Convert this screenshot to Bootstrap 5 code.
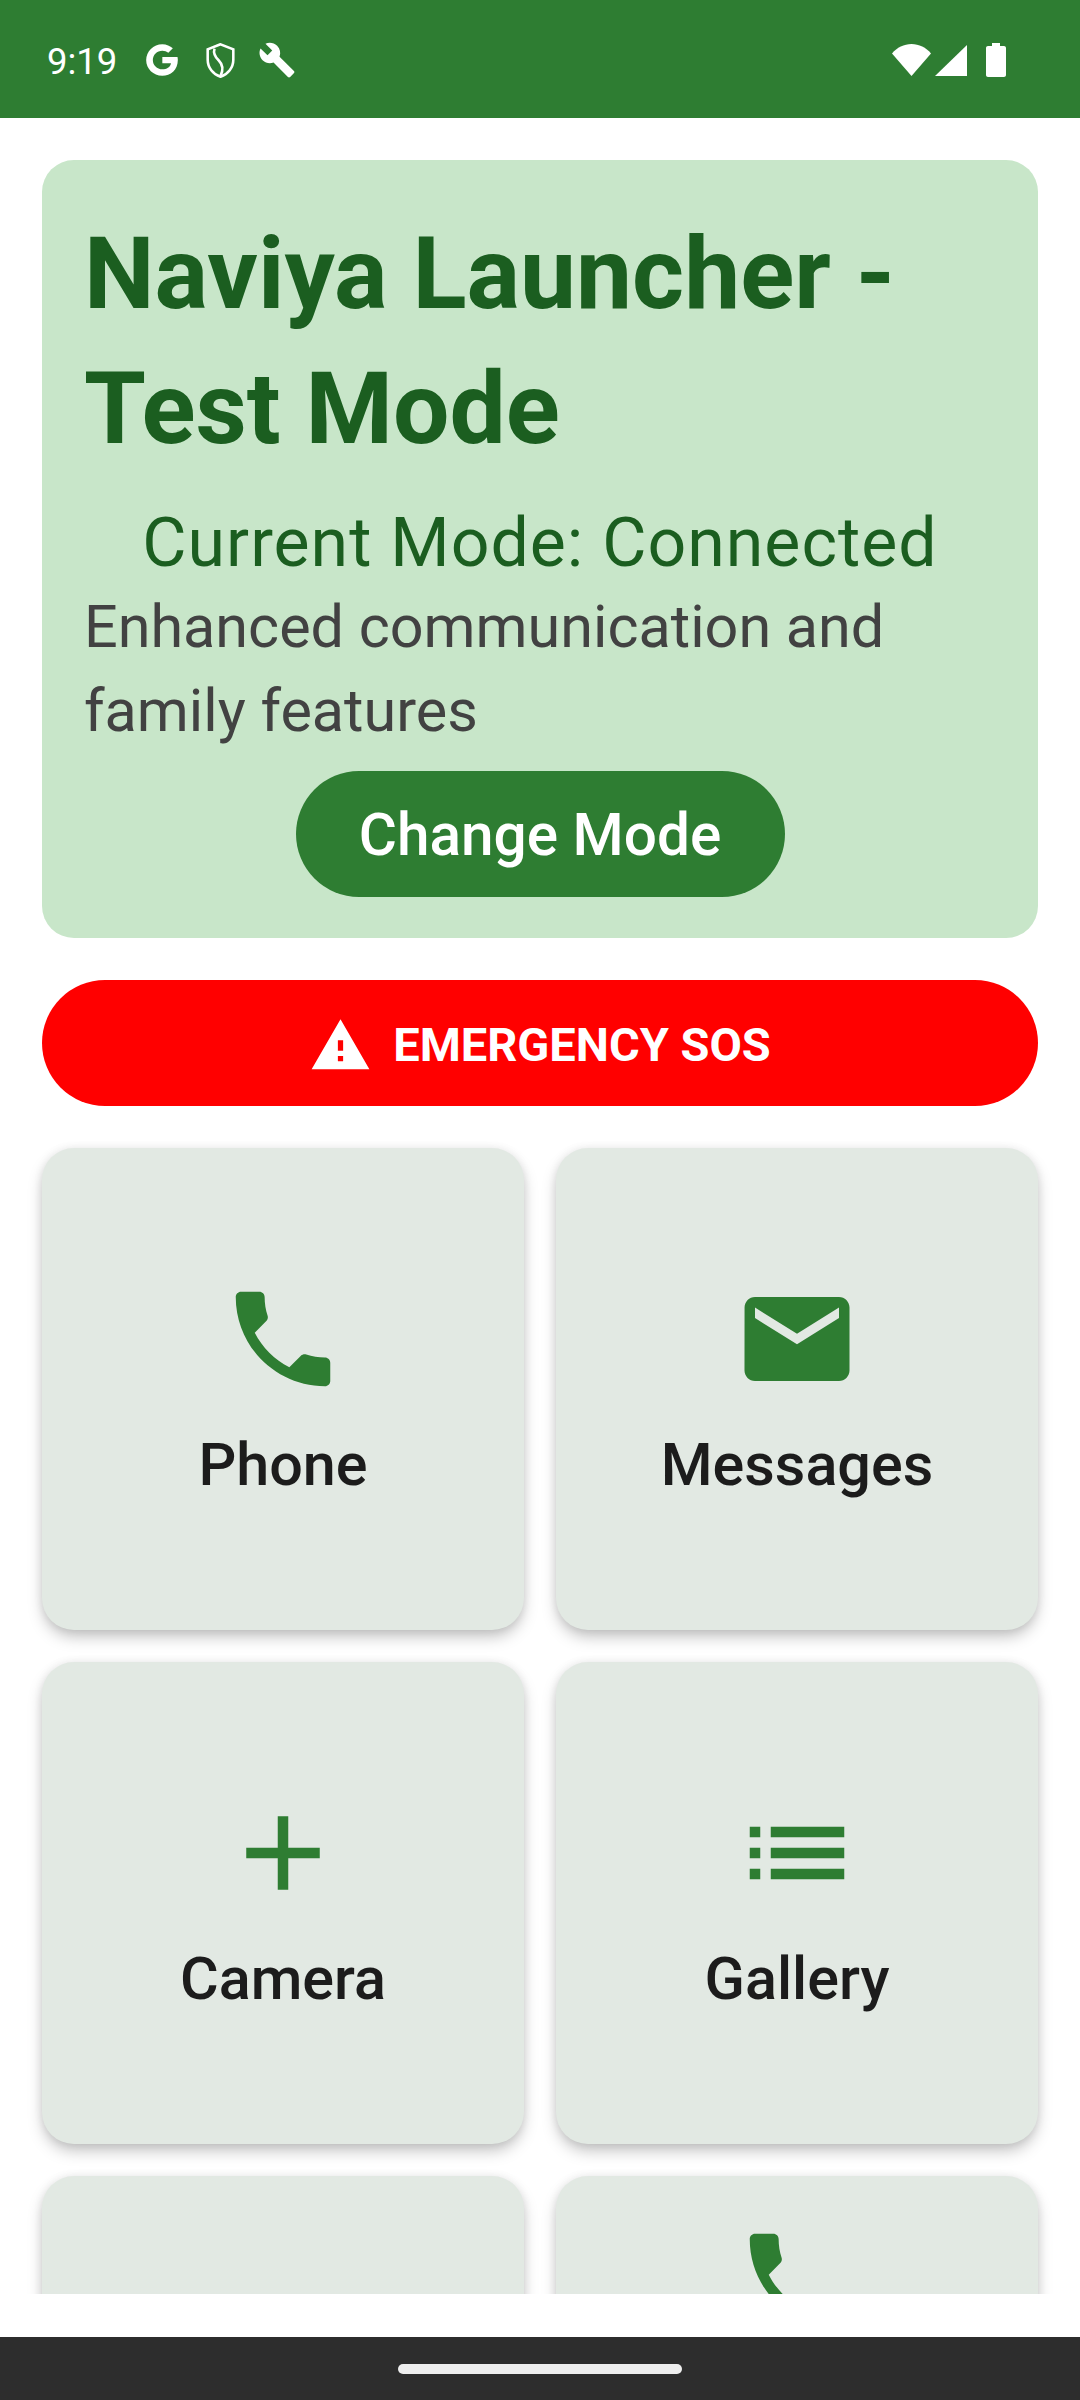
<!DOCTYPE html>
<html lang="en">
<head>
    <meta charset="UTF-8">
    <title>Naviya Launcher</title>
    <link href="https://cdn.jsdelivr.net/npm/bootstrap@5.3.3/dist/css/bootstrap.min.css" rel="stylesheet">
    <style>
        html, body { height: 2400px; overflow: hidden; }
        body { font-family: Roboto, "Liberation Sans", sans-serif; background: #fff; }
        .status-strip { height: 118px; background: #2E7D32; color: #fff; padding: 2px 74px 0 47px; }
        .status-time { font-size: 36.5px; line-height: 1; width: 95px; margin-top: 4px; }
        .status-shield { margin-left: 18px; }
        .status-wrench { margin-left: 17px; }
        .status-signal { margin-left: 4px; }
        .status-batt { margin-left: 19px; }
        .scroll-area { height: 2176px; padding: 42px 42px 0; }
        .hero-box { background: #C8E6C9; border-radius: 32px; padding: 46px 42px 0; height: 778px; }
        .hero-title { font-size: 100px; font-weight: 700; line-height: 135px; color: #1B5E20; margin: 0 0 25px; }
        .hero-mode { font-size: 68px; line-height: 84px; color: #1B5E20; letter-spacing: 1px; text-align: center; }
        .hero-desc { font-size: 59.3px; line-height: 84px; color: #424242; }
        .btn.change-btn { display: block; width: 489px; height: 126px; margin: 18px auto 0; border: 0; border-radius: 63px; background: #2E7D32; color: #fff; font-size: 58.5px; font-weight: 500; padding: 3px 0 0; }
        .btn.sos-btn { width: 100%; height: 126px; margin-top: 42px; border: 0; border-radius: 63px; background: #f00; color: #fff; font-size: 47px; font-weight: 700; padding: 4px 0 0; gap: 21px; }
        .tile-grid { display: grid; grid-template-columns: 482px 482px; gap: 32px; margin-top: 42px; }
        .card.tile { height: 482px; padding-top: 5px; background: #E2E9E3; border: 0; border-radius: 32px; box-shadow: 0 8px 16px -2px rgba(0,0,0,.26), 0 0 10px rgba(0,0,0,.07); }
        .card.tile-top { padding-top: 42px; }
        .tile-icon { width: 126px; height: 126px; fill: #2E7D32; }
        .tile-label { font-size: 59.3px; font-weight: 500; line-height: 84px; color: #1c1c1c; margin-top: 21px; }
        .nav-strip { height: 63px; margin-top: 43px; background: #2D2D2D; }
        .nav-pill { width: 284px; height: 10px; border-radius: 5px; background: #eee; }
    </style>
</head>
<body>

<div class="status-strip d-flex align-items-center">
    <div class="status-time">9:19</div>
    <svg width="40" height="40" viewBox="0 0 24 24" fill="#fff"><path d="M12.200 10.200v3.700h5.200c-.5 2.400-2.500 3.700-5.200 3.700-3.200 0-5.700-2.500-5.700-5.600s2.500-5.600 5.700-5.600c1.400 0 2.600.5 3.600 1.300l2.700-2.700C16.900 3.500 14.700 2.500 12.200 2.500 6.800 2.500 2.500 6.800 2.500 12s4.300 9.500 9.700 9.500c4.900 0 9.300-3.500 9.300-9.500 0-.6-.1-1.200-.2-1.800z"/></svg>
    <svg class="status-shield" width="41" height="41" viewBox="0 0 24 24" fill="none" stroke="#fff" stroke-width="1.500"><path d="M12 2.500 4.500 5.500v6c0 4.600 3.100 8.500 7.500 10 4.400-1.500 7.500-5.400 7.500-10v-6z"/><path d="M8.500 5c-1 3 .5 5 2.500 7 2 2 3 5 1 9"/></svg>
    <svg class="status-wrench" width="38" height="38" viewBox="0 0 24 24" fill="#fff"><path d="M22.700 19l-9.100-9.100c.9-2.300.4-5-1.500-6.900-2-2-5-2.400-7.400-1.300L9 6 6 9 1.600 4.700C.4 7.100.9 10.100 2.900 12.100c1.900 1.900 4.600 2.400 6.900 1.500l9.100 9.100c.4.400 1 .4 1.400 0l2.300-2.300c.5-.4.500-1.100.1-1.400z"/></svg>
    <div class="ms-auto d-flex align-items-center">
        <svg width="39" height="32" viewBox="0 0 39 32" fill="#fff"><path d="M19.500 32 0 9.500C5 3.500 12 0 19.500 0S34 3.500 39 9.500z"/></svg>
        <svg class="status-signal" width="32" height="31" viewBox="0 0 32 31" fill="#fff"><path d="M32 0v31H0z"/></svg>
        <svg class="status-batt" width="20" height="34" viewBox="0 0 20 34" fill="#fff"><path d="M6 0h8v3h4c1.100 0 2 .9 2 2v27c0 1.100-.9 2-2 2H2c-1.100 0-2-.9-2-2V5c0-1.100.9-2 2-2h4z"/></svg>
    </div>
</div>

<div class="scroll-area overflow-hidden">
    <div class="hero-box">
        <h1 class="hero-title">Naviya Launcher - Test Mode</h1>
        <div class="hero-mode">Current Mode: Connected</div>
        <div class="hero-desc">Enhanced communication and family features</div>
        <button type="button" class="btn change-btn">Change Mode</button>
    </div>

    <button type="button" class="btn sos-btn d-flex align-items-center justify-content-center">
        <svg width="63" height="63" viewBox="0 0 24 24" fill="#fff"><path d="M1 21h22L12 2 1 21zm12-3h-2v-2h2v2zm0-4h-2v-4h2v4z"/></svg>
        EMERGENCY SOS
    </button>

    <div class="tile-grid">
        <div class="card tile align-items-center justify-content-center">
            <svg class="tile-icon" viewBox="0 0 24 24"><path d="M6.620 10.790c1.440 2.830 3.760 5.140 6.590 6.590l2.200-2.200c.27-.27.67-.36 1.020-.24 1.120.37 2.330.57 3.570.57.55 0 1 .45 1 1V20c0 .55-.45 1-1 1-9.390 0-17-7.610-17-17 0-.55.45-1 1-1h3.500c.55 0 1 .45 1 1 0 1.250.2 2.450.57 3.570.11.35.03.74-.25 1.020l-2.200 2.200z"/></svg>
            <div class="tile-label">Phone</div>
        </div>
        <div class="card tile align-items-center justify-content-center">
            <svg class="tile-icon" viewBox="0 0 24 24"><path d="M20 4H4c-1.100 0-1.990.9-1.990 2L2 18c0 1.100.9 2 2 2h16c1.100 0 2-.9 2-2V6c0-1.100-.9-2-2-2zm0 4l-8 5-8-5V6l8 5 8-5v2z"/></svg>
            <div class="tile-label">Messages</div>
        </div>
        <div class="card tile align-items-center justify-content-center">
            <svg class="tile-icon" viewBox="0 0 24 24"><path d="M19 13h-6v6h-2v-6H5v-2h6V5h2v6h6v2z"/></svg>
            <div class="tile-label">Camera</div>
        </div>
        <div class="card tile align-items-center justify-content-center">
            <svg class="tile-icon" viewBox="0 0 24 24"><path d="M3 13h2v-2H3v2zm0 4h2v-2H3v2zm0-8h2V7H3v2zm4 4h14v-2H7v2zm0 4h14v-2H7v2zM7 7v2h14V7H7z"/></svg>
            <div class="tile-label">Gallery</div>
        </div>
        <div class="card tile"></div>
        <div class="card tile tile-top align-items-center">
            <svg class="tile-icon" viewBox="0 0 24 24"><path d="M6.620 10.790c1.440 2.830 3.760 5.140 6.590 6.590l2.200-2.200c.27-.27.67-.36 1.020-.24 1.120.37 2.330.57 3.570.57.55 0 1 .45 1 1V20c0 .55-.45 1-1 1-9.390 0-17-7.610-17-17 0-.55.45-1 1-1h3.500c.55 0 1 .45 1 1 0 1.250.2 2.450.57 3.570.11.35.03.74-.25 1.020l-2.200 2.200z"/></svg>
        </div>
    </div>
</div>

<div class="nav-strip d-flex align-items-center justify-content-center">
    <div class="nav-pill"></div>
</div>

</body>
</html>
